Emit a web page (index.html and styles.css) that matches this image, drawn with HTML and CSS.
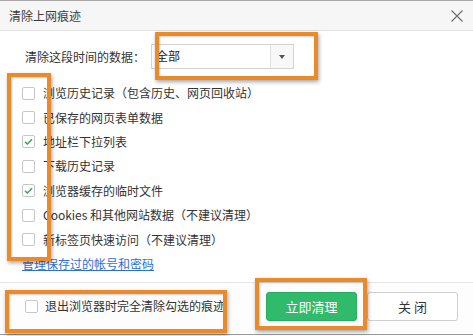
FILE: index.html
```html
<!DOCTYPE html>
<html lang="zh-CN">
<head>
<meta charset="utf-8">
<title>清除上网痕迹</title>
<link rel="stylesheet" href="styles.css">
</head>
<body>
<div class="dialog">
  <div class="titlebar">
    <span class="title">清除上网痕迹</span>
    <svg class="close" width="12" height="12" viewBox="0 0 12 12"><path d="M0.5 0.5 L11.5 11.5 M11.5 0.5 L0.5 11.5" stroke="#6a6a6a" stroke-width="1.1" fill="none"/></svg>
  </div>
  <div class="content">
    <div class="range">
      <span class="range-label">清除这段时间的数据：</span>
      <div class="select">
        <span class="select-value">全部</span>
        <span class="select-btn"><span class="arrow"></span></span>
      </div>
    </div>
    <ul class="list">
      <li class="item"><span class="cb"></span><span>浏览历史记录（包含历史、网页回收站）</span></li>
      <li class="item"><span class="cb"></span><span>已保存的网页表单数据</span></li>
      <li class="item"><span class="cb on"><svg viewBox="0 0 13 13" width="13" height="13"><path d="M3 6.8 L5.4 9 L10 4.2" stroke="#3aa85a" stroke-width="1.6" fill="none"/></svg></span><span>地址栏下拉列表</span></li>
      <li class="item"><span class="cb"></span><span>下载历史记录</span></li>
      <li class="item"><span class="cb on"><svg viewBox="0 0 13 13" width="13" height="13"><path d="M3 6.8 L5.4 9 L10 4.2" stroke="#3aa85a" stroke-width="1.6" fill="none"/></svg></span><span>浏览器缓存的临时文件</span></li>
      <li class="item"><span class="cb"></span><span>Cookies 和其他网站数据（不建议清理）</span></li>
      <li class="item"><span class="cb"></span><span>新标签页快速访问（不建议清理）</span></li>
    </ul>
    <a class="link" href="#">管理保存过的帐号和密码</a>
  </div>
  <div class="footer">
    <label class="exit"><span class="cb"></span><span>退出浏览器时完全清除勾选的痕迹</span></label>
    <div class="buttons">
      <button class="btn primary">立即清理</button>
      <button class="btn">关 闭</button>
    </div>
  </div>
  <div class="annot a-select"></div>
  <div class="annot a-list"></div>
  <div class="annot a-exit"></div>
  <div class="annot a-btn"></div>
</div>
</body>
</html>
```

FILE: styles.css
```css
html, body {
  margin: 0;
  padding: 0;
  background: #fff;
}
body {
  font-family: "Noto Sans CJK SC", "Microsoft YaHei", sans-serif;
  font-size: 12px;
  color: #333;
}
.dialog {
  position: relative;
  width: 473px;
  height: 336px;
  overflow: hidden;
  box-sizing: border-box;
}
.titlebar {
  height: 31px;
  box-sizing: border-box;
  border-top: 1px solid #a8a8a8;
  border-bottom: 1px solid #e2e2e2;
  background: #f6f6f6;
  display: flex;
  align-items: center;
  justify-content: space-between;
  padding: 0 10px 0 9px;
}
.title {
  font-size: 12px;
  color: #3c3c3c;
  line-height: 16px;
}
.close {
  display: block;
  margin-top: 1px;
}
.content {
  padding: 13px 0 0 22px;
}
.range {
  display: flex;
  align-items: center;
  height: 25px;
}
.range-label {
  margin-left: 3px;
  width: 126px;
  line-height: 16px;
}
.select {
  display: flex;
  width: 143px;
  height: 25px;
  box-sizing: border-box;
  border: 1px solid #d4d4d4;
  background: #fff;
}
.select-value {
  flex: 1;
  padding-left: 4px;
  line-height: 22px;
  color: #222;
}
.select-btn {
  width: 22px;
  border-left: 1px solid #e2e2e2;
  background: #f8f8f8;
  display: flex;
  align-items: center;
  justify-content: center;
}
.arrow {
  width: 0;
  height: 0;
  border-left: 3.5px solid transparent;
  border-right: 3.5px solid transparent;
  border-top: 4px solid #555;
  margin-top: 1px;
}
.list {
  list-style: none;
  margin: 12px 0 0 0;
  padding: 0;
}
.item {
  display: flex;
  align-items: center;
  height: 24.4px;
  line-height: 16px;
}
.cb {
  flex: none;
  width: 13px;
  height: 13px;
  box-sizing: border-box;
  border: 1px solid #c6c6c6;
  border-radius: 2px;
  background: #fff;
  margin-right: 8px;
  position: relative;
}
.cb svg {
  position: absolute;
  left: -1px;
  top: -1px;
}
.link {
  display: block;
  height: 24px;
  line-height: 24px;
  color: #2f6fd0;
  text-decoration: underline;
  width: max-content;
}
.footer {
  margin-top: 6px;
  border-top: 1px solid #e6e6e6;
  height: 53px;
  box-sizing: border-box;
  display: flex;
  align-items: flex-start;
  justify-content: space-between;
  padding: 9px 15px 0 25px;
  background: #fdfdfd;
  border-bottom: 1px solid #9a9a9a;
}
.exit {
  display: flex;
  align-items: center;
  height: 29px;
  line-height: 16px;
}
.exit .cb {
  margin-right: 7px;
}
.buttons {
  display: flex;
  gap: 10px;
}
.btn {
  width: 91px;
  height: 29px;
  box-sizing: border-box;
  border: 1px solid #cfcfcf;
  border-radius: 3px;
  background: #fff;
  font-family: inherit;
  font-size: 13px;
  color: #333;
  padding: 0;
  line-height: 27px;
}
.btn.primary {
  background: #2fbb6b;
  border-color: #29ab60;
  color: #fff;
}
.annot {
  position: absolute;
  box-sizing: border-box;
  border: 4px solid #ea8b2b;
  box-shadow: 1px 2px 4px rgba(0, 0, 0, 0.35), inset 1px 1px 2px rgba(0, 0, 0, 0.2);
  pointer-events: none;
}
.a-select {
  left: 155px;
  top: 32px;
  width: 163px;
  height: 48px;
}
.a-list {
  left: 7px;
  top: 73px;
  width: 44px;
  height: 188px;
}
.a-exit {
  left: 5px;
  top: 290px;
  width: 222px;
  height: 43px;
}
.a-btn {
  left: 255px;
  top: 278px;
  width: 112px;
  height: 52px;
}
```
